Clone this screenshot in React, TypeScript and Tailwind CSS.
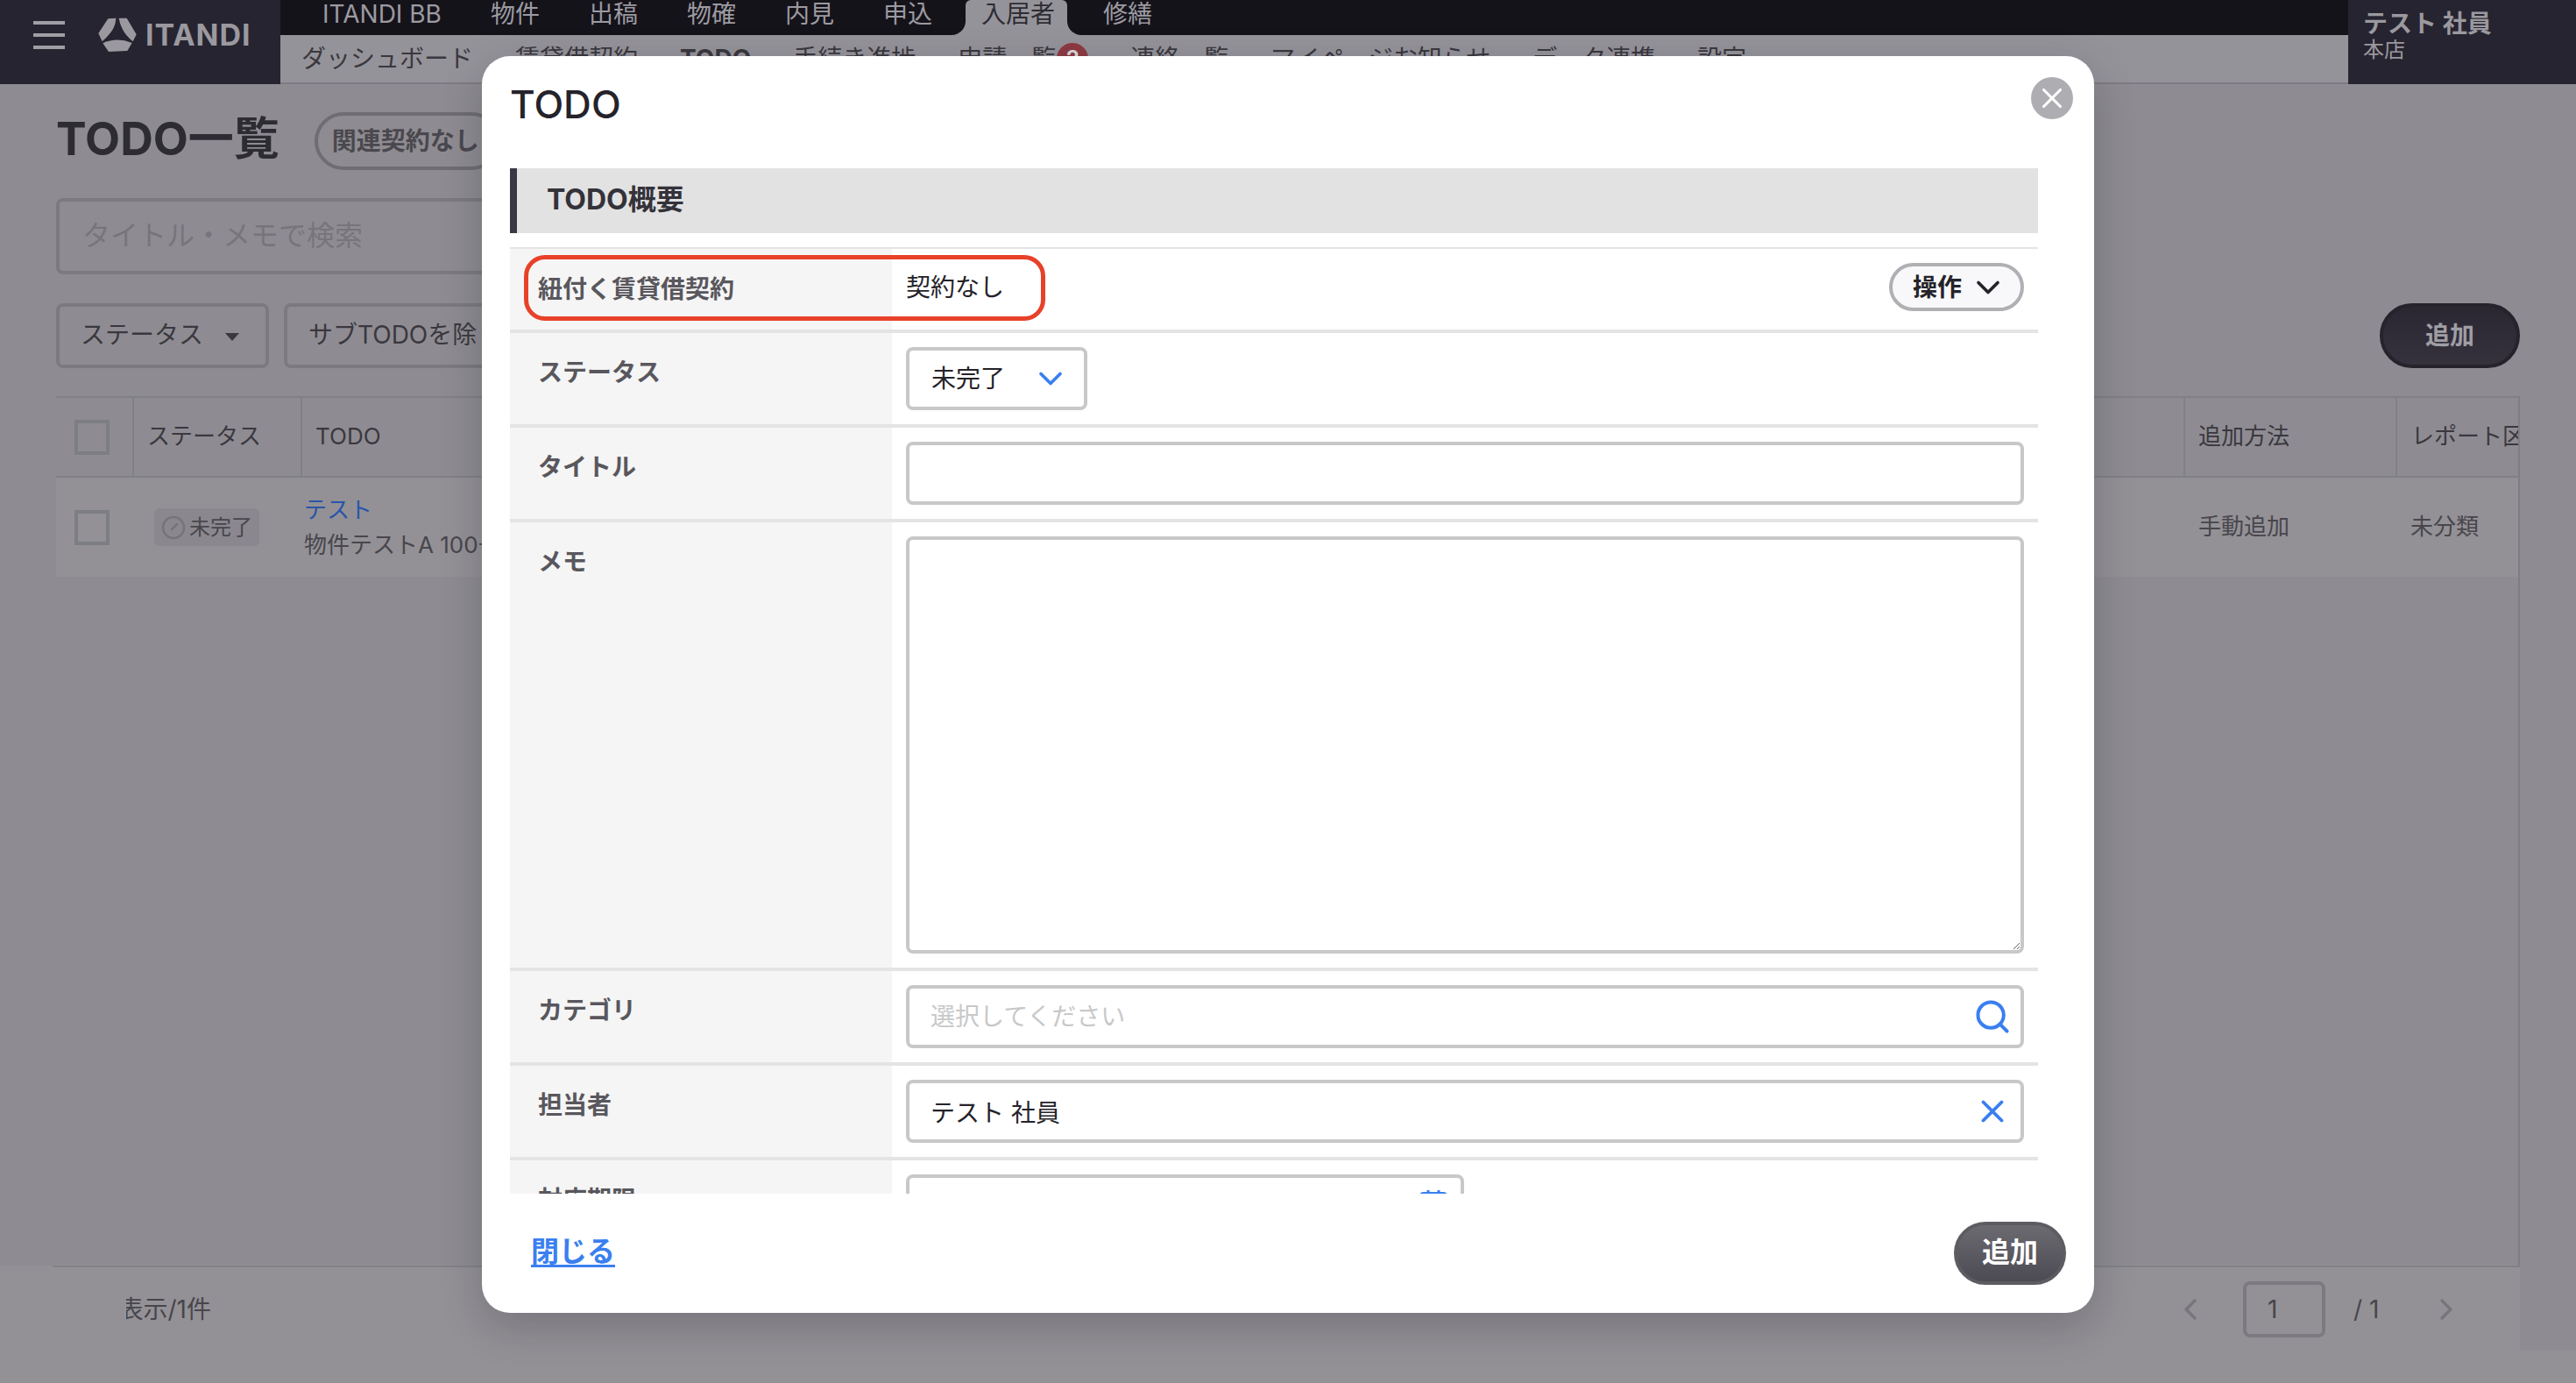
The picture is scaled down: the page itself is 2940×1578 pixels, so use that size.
import React from "react";
import { ChevronDown, ChevronLeft, ChevronRight, Search, X } from "lucide-react";

const topNav = ["物件", "出稿", "物確", "内見", "申込"];

function Logo() {
  return (
    <svg width="70" height="52" viewBox="0 0 210 156" className="shrink-0" fill="#9b999f">
      <path d="M70 22 L97 20 Q96 40 89 53 Q80 72 50 100 L37 72 Z" />
      <path d="M107 20 L134 20 L167 76 L155 100 Q128 78 118 55 Q110 38 107 20 Z" />
      <path d="M52 106 Q100 84 152 105 L136 132 L72 135 Z" />
    </svg>
  );
}

function Row({ label, children, h = "h-[104px]", border = true }: { label: string; children: React.ReactNode; h?: string; border?: boolean }) {
  return (
    <div className={`grid grid-cols-[436px_1fr] ${h} shrink-0 ${border ? "border-b-4 border-[#e4e4e4] box-content" : ""}`}>
      <div className="bg-[#f5f5f5] pl-8 pt-[28px] text-[28px] leading-[34px] font-bold text-[#59575d]">{label}</div>
      <div className="px-4 py-4 min-w-0">{children}</div>
    </div>
  );
}

export default function App() {
  const inputBase =
    "block w-full h-[72px] rounded-lg border-4 border-[#c8c8c8] bg-white px-[24px] text-[28px] text-[#25232a] outline-none placeholder:text-[#c8c8c8]";
  return (
    <div className="relative flex h-[1578px] w-[2940px] flex-col overflow-hidden bg-[#8e8c92] font-['Inter','Noto_Sans_CJK_JP',sans-serif] text-[#2e2c33]">
      {/* header */}
      <header className="flex h-24 shrink-0">
        <div className="flex w-[320px] shrink-0 bg-[#262430]">
          <div className="ml-[38px] mt-6 flex h-8 w-9 flex-col justify-between">
            <span className="h-1 bg-[#a09ea5]" />
            <span className="h-1 bg-[#a09ea5]" />
            <span className="h-1 bg-[#a09ea5]" />
          </div>
          <div className="ml-[26px] mt-[14px]"><Logo /></div>
          <span className="-ml-[4px] mt-[16px] text-[34px] font-bold leading-[48px] tracking-[1px] text-[#9b999f]">ITANDI</span>
        </div>
        <div className="flex min-w-0 flex-1 flex-col">
          <nav className="flex h-10 shrink-0 bg-[#15131a] pl-5 text-[28px] leading-[32px] text-[#9c9aa1]">
            <span className="px-7">ITANDI BB</span>
            {topNav.map((t) => (
              <span key={t} className="px-7">{t}</span>
            ))}
            <span className="relative ml-[10px] mr-[13px] rounded-t-[6px] bg-[#95939a] pl-[18px] pr-[14px] text-[#2e2c33]">
              <span className="absolute -left-4 bottom-0 h-4 w-4 bg-[#95939a]"><span className="block h-full w-full rounded-br-2xl bg-[#15131a]" /></span>
              入居者
              <span className="absolute -right-4 bottom-0 h-4 w-4 bg-[#95939a]"><span className="block h-full w-full rounded-bl-2xl bg-[#15131a]" /></span>
            </span>
            <span className="px-7">修繕</span>
          </nav>
          <nav className="flex h-14 shrink-0 border-b-2 border-[#7e7c82] bg-[#95939a] text-[28px] leading-[54px] text-[#3a383e]">
            <span className="px-6">ダッシュボード</span>
            <span className="px-6">賃貸借契約</span>
            <span className="px-6 font-bold">TODO</span>
            <span className="px-6">手続き進捗</span>
            <span className="flex items-center pl-6 pr-6">
              申請一覧
              <span className="ml-px flex h-9 w-9 items-center justify-center rounded-full bg-[#8e3a42] text-[24px] font-bold text-[#d8d8d8]">2</span>
            </span>
            <span className="px-6">連絡一覧</span>
            <span className="px-6">マイページお知らせ</span>
            <span className="px-6">データ連携</span>
            <span className="px-6">設定</span>
          </nav>
        </div>
        <div className="w-[260px] shrink-0 bg-[#262430] pl-[17px] pt-[10px]">
          <div className="text-[28px] font-bold leading-[34px] text-[#9b999f]">テスト 社員</div>
          <div className="text-[24px] leading-[26px] text-[#9b999f]">本店</div>
        </div>
      </header>

      {/* page */}
      <main className="flex min-h-0 flex-1 flex-col pl-16">
        <div className="mt-8 flex h-[66px] shrink-0 items-center">
          <h1 className="-mt-1 text-[52px] font-bold leading-none text-[#2e2c33]">TODO一覧</h1>
          <span className="ml-[40px] flex h-[66px] items-center rounded-full border-4 border-[#6f6d73] pl-4 pr-5 text-[28px] font-bold text-[#4a484e]">関連契約なし</span>
        </div>
        <div className="mt-8 flex h-[87px] w-[1000px] shrink-0 items-center rounded-lg border-4 border-[#7c7a80] pb-[2px] pl-[26px] text-[32px] text-[#77757b]">タイトル・メモで検索</div>
        <div className="mt-[33px] flex h-[74px] shrink-0 pr-16">
          <div className="flex w-[243px] items-center rounded-lg border-4 border-[#7c7a80] pb-[2px] pl-[24px] text-[28px] text-[#3a383e]">
            ステータス
            <span className="ml-[25px] mt-1 h-0 w-0 border-x-[8px] border-t-[9px] border-x-transparent border-t-[#3a383e]" />
          </div>
          <div className="ml-[17px] flex w-[400px] items-center rounded-lg border-4 border-[#7c7a80] pb-[2px] pl-[24px] text-[28px] text-[#3a383e]">サブTODOを除く</div>
          <div className="ml-auto flex w-40 items-center justify-center rounded-full border-4 border-[#25232c] bg-linear-to-b from-[#2a2733] to-[#35323e] text-[28px] font-bold text-[#a09ea5]">追加</div>
        </div>
        <div className="mt-8 flex min-h-0 w-[2812px] flex-1 flex-col border-r-2 border-[#7f7d83]">
          <div className="flex h-[93px] shrink-0 border-y-2 border-[#7f8185] text-[26px] text-[#3a383e]">
            <div className="flex w-[89px] items-center border-r-2 border-[#7f8185] pl-[21px]">
              <span className="h-10 w-10 border-4 border-[#7c7e84]" />
            </div>
            <div className="flex w-[192px] items-center border-r-2 border-[#7f8185] pb-[2px] pl-[15px]">ステータス</div>
            <div className="flex flex-1 items-center border-r-2 border-[#7f8185] pb-[2px] pl-[15px]">TODO</div>
            <div className="flex w-[242px] items-center border-r-2 border-[#7f8185] pb-[2px] pl-[15px]">追加方法</div>
            <div className="flex w-[138px] items-center overflow-hidden whitespace-nowrap pb-[2px] pl-[16px]">レポート区分</div>
          </div>
          <div className="flex h-[113px] shrink-0 bg-[#939196] text-[26px] text-[#48464c]">
            <div className="flex w-[89px] items-center pl-[21px]">
              <span className="h-10 w-10 border-4 border-[#7c7e84]" />
            </div>
            <div className="flex w-[192px] items-center pl-[23px]">
              <span className="flex h-[43px] w-[120px] items-center rounded-md bg-[#8a888e] pl-2 text-[24px]">
                <svg width="28" height="28" viewBox="0 0 28 28" fill="none" stroke="#767478" strokeWidth="2.5" className="mr-1 shrink-0">
                  <circle cx="14" cy="14" r="12" />
                  <path d="M12 16 L18 10" strokeLinecap="round" />
                </svg>
                未完了
              </span>
            </div>
            <div className="flex flex-1 flex-col justify-center pl-[2px] leading-[40px]">
              <span className="text-[#2a55a8]">テスト</span>
              <span>物件テストA 100号室</span>
            </div>
            <div className="flex w-[242px] items-center pb-[2px] pl-[15px]">手動追加</div>
            <div className="flex w-[138px] items-center pb-[2px] pl-[15px]">未分類</div>
          </div>
        </div>
      </main>

      {/* pagination bar */}
      <footer className="h-[134px] shrink-0 bg-[#939196]">
        <div className="flex h-[97px]">
          <div className="ml-[60px] flex w-[2816px] items-center border-t-2 border-[#808286] pl-[84px] text-[28px] text-[#48464c]">
            <div className="flex w-[97px] justify-end overflow-hidden whitespace-nowrap"><span className="shrink-0">1件表示/1件</span></div>
            <div className="ml-auto flex items-center pr-16">
              <ChevronLeft size={40} strokeWidth={2} className="text-[#77757b]" />
              <span className="ml-[40px] flex h-16 w-[94px] items-center rounded-lg border-4 border-[#7c7a80] pl-6 text-[#48464c]">1</span>
              <span className="ml-8 w-[35px] text-[#48464c]">/ 1</span>
              <ChevronRight size={40} strokeWidth={2} className="ml-[51px] text-[#77757b]" />
            </div>
          </div>
          <div className="flex-1 bg-[#8e8c92]" />
        </div>
      </footer>

      {/* modal */}
      <div className="absolute left-[550px] top-16 flex h-[1434px] w-[1840px] flex-col rounded-[32px] bg-white shadow-[0_16px_48px_rgba(20,18,28,0.22)]">
        <div className="h-32 shrink-0 pl-8 pt-[24px] text-[44px] font-medium leading-[62px] text-[#25232a]">TODO</div>
        <button className="absolute right-6 top-6 flex h-12 w-12 items-center justify-center rounded-full bg-[#adadb2] text-white">
          <X size={38} strokeWidth={2} />
        </button>
        <div className="flex min-h-0 flex-1 flex-col overflow-hidden pl-8 pr-16">
          <div className="flex h-[74px] shrink-0 items-center border-l-8 border-[#3a3842] bg-[#e2e2e2] pb-[2px] pl-[34px] text-[32px] font-bold text-[#34323a]">TODO概要</div>
          <div className="mt-4 h-[2px] shrink-0 bg-[#e4e4e4]" />

          <div className="relative grid h-[92px] shrink-0 box-content grid-cols-[436px_1fr] border-b-4 border-[#e4e4e4]">
            <div className="flex items-center bg-[#f5f5f5] pb-[1px] pl-8 text-[28px] font-bold text-[#59575d]">紐付く賃貸借契約</div>
            <div className="flex items-center justify-between pl-4 pr-4 text-[28px] text-[#25232a]">
              <span className="pb-1">契約なし</span>
              <span className="mb-[5px] flex h-[55px] w-[154px] items-center rounded-full border-4 border-[#b0b0b4] bg-[#f8f8fa] pl-[23px] font-bold">
                操作
                <ChevronDown size={44} strokeWidth={2} className="ml-[8px] shrink-0" />
              </span>
            </div>
            <div className="absolute left-4 top-[7px] h-[75px] w-[595px] rounded-[24px] border-[5px] border-[#e8412a]" />
          </div>

          <Row label="ステータス">
            <div className="flex h-[72px] w-[207px] items-center rounded-lg border-4 border-[#c8c8c8] pl-[25px] text-[28px] text-[#25232a]">
              未完了
              <ChevronDown size={44} strokeWidth={2} className="ml-[30px] shrink-0 text-[#3a7ff0]" />
            </div>
          </Row>
          <Row label="タイトル">
            <input className={inputBase} />
          </Row>
          <Row label="メモ" h="h-[508px]">
            <textarea className="block h-[476px] w-full rounded-lg border-4 border-[#c8c8c8] bg-white p-4 text-[28px] outline-none" />
          </Row>
          <Row label="カテゴリ">
            <div className="relative">
              <input className={inputBase} placeholder="選択してください" readOnly />
              <Search size={44} strokeWidth={2.2} className="absolute right-[14px] top-[14px] text-[#3a7ff0]" />
            </div>
          </Row>
          <Row label="担当者">
            <div className="relative">
              <input className={inputBase} value="テスト 社員" readOnly />
              <X size={42} strokeWidth={2.2} className="absolute right-[15px] top-[15px] text-[#3a7ff0]" />
            </div>
          </Row>
          <Row label="対応期限" border={false}>
            <div className="relative w-[637px]">
              <input className={inputBase} readOnly />
              <svg width="32" height="36" viewBox="0 0 32 36" fill="none" stroke="#3a7ff0" strokeWidth="3" className="absolute left-[586px] top-[18px]">
                <rect x="1.5" y="3.5" width="29" height="30" rx="3" />
                <path d="M10 0 V7 M22 0 V7" />
              </svg>
            </div>
          </Row>
        </div>
        <div className="flex h-[136px] shrink-0 items-center justify-between pl-[56px] pr-8">
          <a className="pb-1 text-[32px] font-bold text-[#3a7ff0] underline underline-offset-4">閉じる</a>
          <button className="flex h-[72px] w-32 items-center justify-center rounded-full border-4 border-[#5e5c62] bg-linear-to-b from-[#6d6b72] to-[#4c4a52] pb-[2px] text-[32px] font-bold text-white">追加</button>
        </div>
      </div>
    </div>
  );
}
